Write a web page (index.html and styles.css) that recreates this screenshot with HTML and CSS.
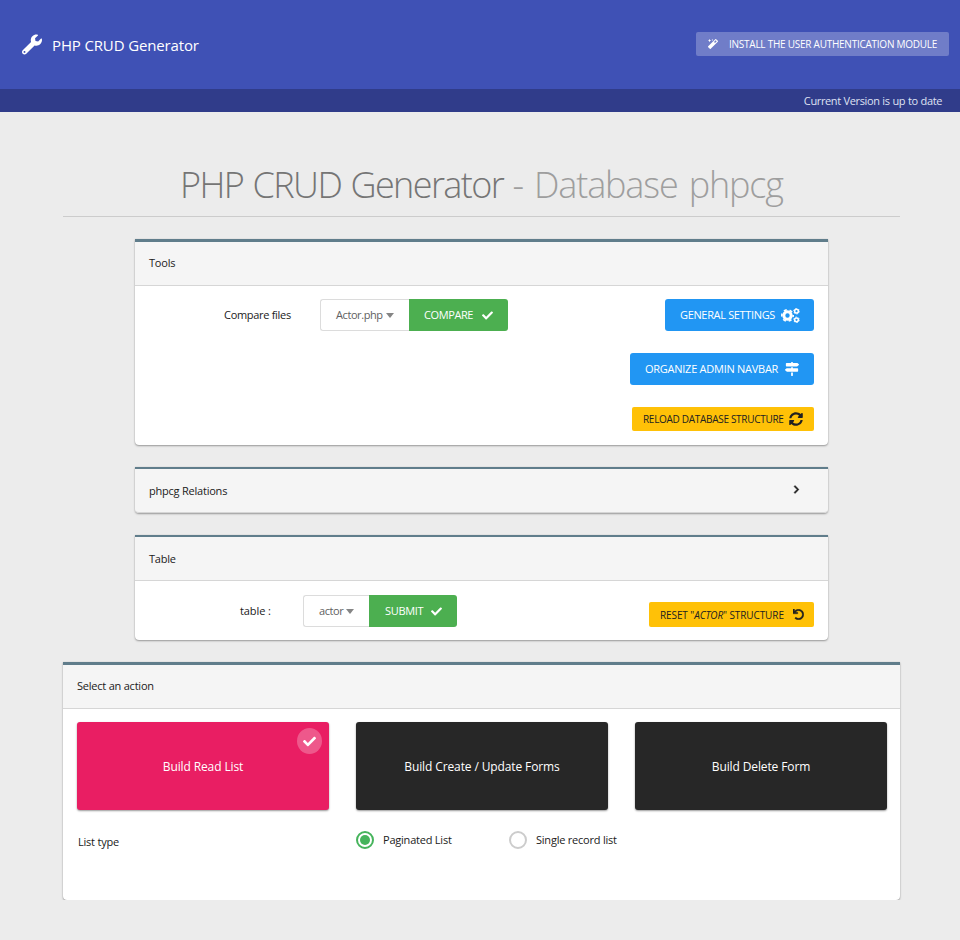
FILE: index.html
```html
<!DOCTYPE html>
<html lang="en">
<head>
<meta charset="utf-8">
<title>PHP CRUD Generator</title>
<link rel="stylesheet" href="styles.css">
</head>
<body>
<svg class="sprite" aria-hidden="true">
  <symbol id="check" viewBox="0 0 512 512"><path d="M173.898 439.404l-166.4-166.4c-9.997-9.997-9.997-26.206 0-36.204l36.203-36.204c9.997-9.998 26.207-9.998 36.204 0L192 312.69 432.095 72.596c9.997-9.997 26.207-9.997 36.204 0l36.203 36.204c9.997 9.997 9.997 26.206 0 36.204l-294.4 294.401c-9.998 9.997-26.207 9.997-36.204-.001z"/></symbol>
</svg>
<header class="navbar">
  <div class="brand">
    <svg class="i-wrench" viewBox="0 0 512 512"><path d="M507.73 109.1c-2.24-9.03-13.54-12.09-20.12-5.51l-74.36 74.36-67.88-11.31-11.31-67.88 74.36-74.36c6.62-6.62 3.43-17.9-5.66-20.16-47.38-11.74-99.55.91-136.58 37.93-39.64 39.64-50.55 97.1-34.05 147.2L18.74 402.76c-24.99 24.99-24.99 65.51 0 90.5 24.99 24.99 65.51 24.99 90.5 0l213.21-213.21c50.12 16.71 107.47 5.68 147.37-34.22 37.07-37.07 49.7-89.32 37.91-136.73zM64 472c-13.25 0-24-10.75-24-24 0-13.26 10.75-24 24-24s24 10.74 24 24c0 13.25-10.75 24-24 24z"/></svg>
    <span class="brand-text">PHP CRUD Generator</span>
  </div>
  <a class="btn btn-install">
    <svg class="i-magic" viewBox="0 0 512 512"><path d="M224 96l16-32 32-16-32-16-16-32-16 32-32 16 32 16zM80 160l26.700-53.300L160 80l-53.300-26.700L80 0 53.300 53.300 0 80l53.300 26.700zM502.600 93.700L418.300 9.400C412 3.100 403.800 0 395.700 0s-16.400 3.100-22.600 9.400L9.400 373.100c-12.500 12.500-12.500 32.800 0 45.300l84.300 84.300c6.200 6.200 14.400 9.400 22.600 9.400s16.400-3.100 22.600-9.400l363.700-363.700c12.500-12.500 12.500-32.800 0-45.300zM359.500 203.500l-50.900-50.900 86.600-86.600 50.900 50.900z"/></svg>
    <span>INSTALL THE USER AUTHENTICATION MODULE</span>
  </a>
</header>
<div class="version"><span>Current Version is up to date</span></div>
<main>
  <h1><span class="title-main">PHP CRUD Generator</span> <small>- Database phpcg</small></h1>

  <section class="card narrow tools">
    <h2 class="card-header"><span>Tools</span></h2>
    <div class="tools-body">
      <div class="form-row">
        <label class="compare-label">Compare files</label>
        <div class="group">
          <span class="select select-file"><span>Actor.php</span><i class="caret"></i></span>
          <a class="btn btn-green btn-compare"><span>COMPARE</span><svg class="i-check"><use href="#check"/></svg></a>
        </div>
      </div>
      <div class="tool-buttons">
        <a class="btn btn-blue btn-settings"><span>GENERAL SETTINGS</span>
          <svg class="i-cogs" viewBox="0 0 19 15"><g fill="none" stroke="currentColor"><circle cx="6.500" cy="7.500" r="3.700" stroke-width="3"/><circle cx="6.500" cy="7.500" r="5.700" stroke-width="1.600" stroke-dasharray="3 2.970" stroke-dashoffset="1.500"/><circle cx="15.500" cy="3.200" r="1.850" stroke-width="1.500"/><circle cx="15.500" cy="3.200" r="2.800" stroke-width=".900" stroke-dasharray="1.500 1.430"/><circle cx="15.500" cy="11.800" r="1.850" stroke-width="1.500"/><circle cx="15.500" cy="11.800" r="2.800" stroke-width=".900" stroke-dasharray="1.500 1.430"/></g></svg></a>
        <a class="btn btn-blue btn-organize"><span>ORGANIZE ADMIN NAVBAR</span>
          <svg class="i-signs" viewBox="0 0 512 512"><path d="M507.31 84.69L464 41.37c-6-6-14.14-9.37-22.63-9.37H288V16c0-8.84-7.16-16-16-16h-32c-8.84 0-16 7.16-16 16v16H56c-13.25 0-24 10.75-24 24v80c0 13.25 10.75 24 24 24h385.37c8.49 0 16.62-3.37 22.63-9.37l43.31-43.31c6.25-6.26 6.25-16.38 0-22.63zM224 496c0 8.84 7.16 16 16 16h32c8.84 0 16-7.16 16-16V384h-64v112zm232-272H288v-32h-64v32H70.63c-8.49 0-16.62 3.37-22.63 9.37L4.69 276.69c-6.25 6.25-6.25 16.38 0 22.63L48 342.63c6 6 14.14 9.37 22.63 9.37H456c13.25 0 24-10.75 24-24v-80c0-13.25-10.75-24-24-24z"/></svg></a>
        <a class="btn btn-amber btn-reload"><span>RELOAD DATABASE STRUCTURE</span>
          <svg class="i-sync" viewBox="0 0 512 512"><path d="M370.72 133.28C339.458 104.008 298.888 87.962 255.848 88c-77.458.068-144.328 53.178-162.791 126.85-1.344 5.363-6.122 9.15-11.651 9.15H24.103c-7.498 0-13.194-6.807-11.807-14.176C33.933 94.924 134.813 8 256 8c66.448 0 126.791 26.136 171.315 68.685L463.03 40.97C478.149 25.851 504 36.559 504 57.941V192c0 13.255-10.745 24-24 24H345.941c-21.382 0-32.09-25.851-16.971-40.971l41.75-41.749zM32 296h134.059c21.382 0 32.09 25.851 16.971 40.971l-41.75 41.75c31.262 29.273 71.835 45.319 114.876 45.28 77.418-.07 144.315-53.144 162.787-126.849 1.344-5.363 6.122-9.15 11.651-9.15h57.304c7.498 0 13.194 6.807 11.807 14.176C478.067 417.076 377.187 504 256 504c-66.448 0-126.791-26.136-171.315-68.685L48.97 471.03C33.851 486.149 8 475.441 8 454.059V320c0-13.255 10.745-24 24-24z"/></svg></a>
      </div>
    </div>
  </section>

  <section class="card narrow thin relations">
    <h2 class="card-header"><span>phpcg Relations</span>
      <svg class="i-chevron" viewBox="0 0 320 512"><path stroke="currentColor" stroke-width="30" d="M285.476 272.971L91.132 467.314c-9.373 9.373-24.569 9.373-33.941 0l-22.667-22.667c-9.357-9.357-9.375-24.522-.04-33.901L188.505 256 34.484 101.255c-9.335-9.379-9.317-24.544.04-33.901l22.667-22.667c9.373-9.373 24.569-9.373 33.941 0L285.475 239.03c9.373 9.372 9.373 24.568.001 33.941z"/></svg></h2>
  </section>

  <section class="card narrow thin table-card">
    <h2 class="card-header"><span>Table</span></h2>
    <div class="table-body">
      <div class="form-row">
        <label class="table-label">table :</label>
        <div class="group">
          <span class="select select-table"><span>actor</span><i class="caret"></i></span>
          <a class="btn btn-green btn-submit"><span>SUBMIT</span><svg class="i-check"><use href="#check"/></svg></a>
        </div>
      </div>
      <a class="btn btn-amber btn-reset"><span>RESET "<em>ACTOR</em>" STRUCTURE</span>
        <svg class="i-undo" viewBox="0 0 512 512"><path stroke="currentColor" stroke-width="16" d="M212.333 224.333H12c-6.627 0-12-5.373-12-12V12C0 5.373 5.373 0 12 0h48c6.627 0 12 5.373 12 12v78.112C117.773 39.279 184.26 7.47 258.175 8.007c136.906.994 246.448 111.623 246.157 248.532C504.041 393.258 393.12 504 256.333 504c-64.089 0-122.496-24.313-166.51-64.215-5.099-4.622-5.334-12.554-.467-17.42l33.967-33.967c4.474-4.474 11.662-4.717 16.401-.525C170.76 415.336 211.58 432 256.333 432c97.268 0 176-78.716 176-176 0-97.267-78.716-176-176-176-58.496 0-110.28 28.476-142.274 72.333h98.274c6.627 0 12 5.373 12 12v48c0 6.627-5.373 12-12 12z"/></svg></a>
    </div>
  </section>

  <section class="card actions">
    <h2 class="card-header"><span>Select an action</span></h2>
    <div class="choices">
      <a class="choice selected"><span>Build Read List</span><i class="badge"><svg><use href="#check"/></svg></i></a>
      <a class="choice"><span>Build Create / Update Forms</span></a>
      <a class="choice"><span>Build Delete Form</span></a>
    </div>
    <div class="list-type">
      <span class="t-list">List type</span>
      <label class="radio on"><i></i><span>Paginated List</span></label>
      <label class="radio"><i></i><span>Single record list</span></label>
    </div>
  </section>
</main>
</body>
</html>
```
FILE: styles.css
```css
* { box-sizing: border-box; }
body {
  margin: 0;
  background: #ececec;
  color: #212121;
  font: 11px/16px "Open Sans", "Noto Sans", sans-serif;
  letter-spacing: -0.22px;
  white-space: nowrap;
}
svg { display: block; flex: none; fill: currentColor; }
.sprite { position: absolute; width: 0; height: 0; }
h1, h2 { margin: 0; font-weight: 400; }

.navbar {
  display: flex;
  align-items: center;
  justify-content: space-between;
  height: 89px;
  padding: 0 11px 0 22px;
  background: #3f51b5;
  color: #fff;
}
.brand { display: flex; align-items: center; gap: 10px; font-size: 15px; line-height: 20px; }
.brand-text { letter-spacing: -0.14px; }
.i-wrench { width: 20px; height: 21px; }
.version {
  height: 23px;
  padding: 4px 18px 0 0;
  background: #303c8a;
  color: #dfe2f3;
  text-align: right;
  letter-spacing: -0.37px;
  word-spacing: 0.3px;
}

.btn { display: flex; align-items: center; height: 32px; border-radius: 3px; color: #fff; letter-spacing: -0.3px; }
.btn-install { width: 253px; height: 24px; margin-bottom: 2px; padding-left: 12px; gap: 11px; border-radius: 2px; background: #707dc8; font-size: 10px; letter-spacing: -0.25px; }
.i-magic { width: 10px; height: 10px; }
.btn-green { background: #4caf50; border-radius: 0 3px 3px 0; padding-left: 15px; }
.btn-compare { width: 99px; gap: 9px; letter-spacing: -0.4px; }
.btn-submit { width: 88px; padding-left: 16px; gap: 8px; }
.i-check { width: 11px; height: 11px; }
.btn-blue { background: #2196f3; padding-left: 15px; }
.btn-settings { width: 149px; letter-spacing: -0.34px; }
.btn-organize { width: 184px; letter-spacing: -0.26px; }
.btn-amber { background: #ffc107; color: #212121; height: 24px; border-radius: 2px; font-size: 10px; padding-left: 11px; }
.btn-reload { width: 182px; }
.btn-reset { width: 165px; height: 25px; letter-spacing: -0.1px; }
.i-cogs { width: 19px; height: 15px; margin-left: 6px; }
.i-signs { width: 14px; height: 14px; margin-left: 7px; }
.i-sync { width: 14px; height: 14px; margin-left: 5px; }
.i-undo { width: 11px; height: 11px; margin-left: 9px; }

main { width: 837px; margin: 0 0 0 63px; }
h1 {
  height: 105px;
  padding-top: 48px;
  border-bottom: 1px solid #cccccc;
  font-size: 36px;
  line-height: 50px;
  font-weight: 300;
  text-align: center;
  color: #757575;
  letter-spacing: -1.6px;
  word-spacing: 1.5px;
}
h1 small { font-size: 36px; color: #9e9e9e; letter-spacing: -1.15px; word-spacing: 3px; }

.card {
  background: #fff;
  border-top: 3px solid #607d8b;
  border-radius: 0 0 4px 4px;
  box-shadow: 0 1px 2px rgba(0, 0, 0, 0.35), 0 0 1px rgba(0, 0, 0, 0.2);
}
.thin { border-top-width: 2px; }
.narrow { width: 693px; margin-left: 72px; }
.card-header {
  display: flex;
  align-items: center;
  justify-content: space-between;
  height: 44px;
  padding: 0 28px 2px 14px;
  background: #f5f5f5;
  border-bottom: 1px solid #d6d6d6;
  font-size: 11px;
  line-height: 16px;
}
.thin .card-header { padding-bottom: 0; }
.tools { height: 206px; margin-top: 22px; }
.tools-body { display: flex; justify-content: space-between; padding: 13px 14px 0 0; }
.form-row { display: flex; }
.form-row label { line-height: 32px; }
.compare-label { width: 185px; padding-left: 89px; letter-spacing: -0.3px; }
.table-label { width: 168px; padding-left: 105px; letter-spacing: -0.1px; }
.group { display: flex; }
.select {
  display: flex;
  align-items: center;
  gap: 3px;
  height: 32px;
  padding-left: 15px;
  border: 1px solid #dcdcdc;
  border-right: 0;
  border-radius: 3px 0 0 3px;
  color: #616161;
  letter-spacing: -0.42px;
}
.select-file { width: 89px; }
.select-table { width: 66px; }
.caret { border: 4px solid transparent; border-top: 5px solid #858585; border-bottom: 0; }
.tool-buttons { display: flex; flex-direction: column; align-items: flex-end; gap: 22px; }

.relations { height: 46px; margin-top: 22px; }
.relations .card-header { border-radius: 0 0 4px 4px; padding-right: 28px; }
.i-chevron { width: 7px; height: 9px; margin-bottom: 2px; }
.table-card { height: 105px; margin-top: 22px; }
.table-body { display: flex; justify-content: space-between; padding: 14px 14px 0 0; }
.btn-reset { margin-top: 7px; }

.actions { height: 238px; margin-top: 22px; }
.choices { display: flex; gap: 27px; padding: 13px 13px 0 14px; }
.choice {
  position: relative;
  display: flex;
  align-items: center;
  justify-content: center;
  width: 252px;
  height: 88px;
  padding-top: 2px;
  border-radius: 3px;
  background: #272727;
  color: #fff;
  font-size: 12px;
  letter-spacing: -0.12px;
  box-shadow: 0 1px 2px rgba(0, 0, 0, 0.4);
}
.selected { background: #e91e63; }
.badge {
  position: absolute;
  top: 6px;
  right: 7px;
  display: grid;
  place-items: center;
  width: 25px;
  height: 26px;
  border-radius: 50%;
  background: rgba(255, 255, 255, 0.26);
}
.badge svg { width: 13px; height: 13px; }
.list-type { display: grid; grid-template-columns: 278px 153px 1fr; align-items: center; height: 24px; margin-top: 18px; padding-left: 15px; }
.t-list { padding-top: 4px; }
.radio { display: flex; align-items: center; gap: 9px; }
.radio i { display: grid; place-items: center; width: 18px; height: 18px; border: 2px solid #ccc; border-radius: 50%; }
.radio.on i { border-color: #46b45c; }
.radio.on i::after { content: ""; width: 10px; height: 10px; border-radius: 50%; background: #46b45c; }
```
